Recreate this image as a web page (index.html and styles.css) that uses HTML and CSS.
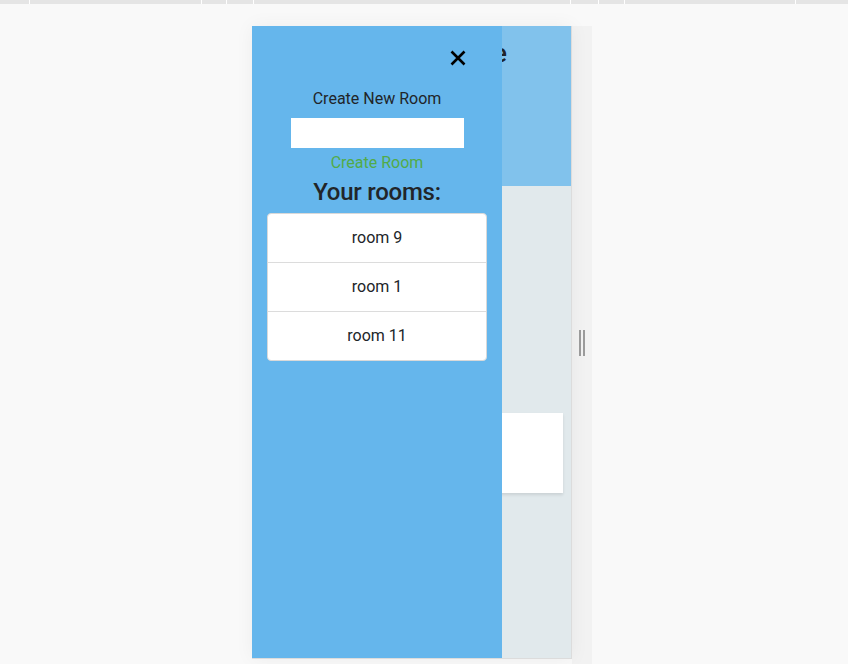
FILE: index.html
```html
<!DOCTYPE html>
<html lang="en">
<head>
<meta charset="utf-8">
<title>Chat Rooms</title>
<link rel="stylesheet" href="styles.css">
</head>
<body>
<div class="topbar"></div>
<div class="stage">
  <div class="device">
    <div class="screen">
      <header class="app-header">
        <h1 class="app-title">Welcome</h1>
      </header>
      <main class="app-main">
        <div class="card"></div>
      </main>
      <aside class="sidebar">
        <div class="close-row">
          <button class="close-btn" aria-label="Close">
            <svg width="16" height="16" viewBox="0 0 16 16"><path d="M1.5 1.5 L14.5 14.5 M14.5 1.5 L1.5 14.5" stroke="#000" stroke-width="2.6" fill="none"/></svg>
          </button>
        </div>
        <div class="label">Create New Room</div>
        <input class="room-input" type="text">
        <div class="create-link">Create Room</div>
        <h4 class="rooms-title">Your rooms:</h4>
        <ul class="list-group">
          <li class="list-item">room 9</li>
          <li class="list-item">room 1</li>
          <li class="list-item">room 11</li>
        </ul>
      </aside>
    </div>
    <div class="handle-strip">
      <div class="handle"><span class="bar"></span><span class="bar"></span></div>
    </div>
  </div>
</div>
</body>
</html>
```
FILE: styles.css
```css
* { box-sizing: border-box; }
html, body { margin: 0; padding: 0; }
body {
  background: #f9f9f9;
  font-family: Roboto, "Liberation Sans", sans-serif;
  color: #212529;
  height: 664px;
  overflow: hidden;
}
.topbar {
  height: 4px;
  background:
    linear-gradient(#fff, #fff) 29px 0 / 1px 4px no-repeat,
    linear-gradient(#fff, #fff) 201px 0 / 1px 4px no-repeat,
    linear-gradient(#fff, #fff) 226px 0 / 1px 4px no-repeat,
    linear-gradient(#fff, #fff) 253px 0 / 1px 4px no-repeat,
    linear-gradient(#fff, #fff) 570px 0 / 1px 4px no-repeat,
    linear-gradient(#fff, #fff) 598px 0 / 1px 4px no-repeat,
    linear-gradient(#fff, #fff) 624px 0 / 1px 4px no-repeat,
    linear-gradient(#fff, #fff) 795px 0 / 1px 4px no-repeat,
    #e5e5e5;
}
.stage {
  padding-top: 22px;
  padding-left: 252px;
}
.device {
  display: flex;
  width: 340px;
  height: 638px;
}
.screen {
  position: relative;
  width: 320px;
  height: 633px;
  background: #e1e9ec;
  border-right: 1px solid #dcdcdc;
  border-bottom: 1px solid #dcdcdc;
  box-shadow: 0 0 18px rgba(0,0,0,0.05);
  overflow: hidden;
}
.app-header {
  height: 160px;
  background: #81c2ec;
  display: flex;
  justify-content: flex-end;
  padding: 12px 64px 0 0;
}
.app-title {
  margin: 0;
  font-size: 26px;
  font-weight: 500;
  line-height: 30px;
  color: #212529;
}
.app-main {
  padding: 227px 8px 0 10px;
}
.card {
  height: 80px;
  background: #fff;
  box-shadow: 0 2px 3px rgba(0,0,0,0.1);
}
.sidebar {
  position: absolute;
  left: 0;
  top: 0;
  width: 250px;
  height: 100%;
  background: #65b6ec;
  padding-top: 24px;
  display: flex;
  flex-direction: column;
  align-items: center;
}
.close-row {
  align-self: stretch;
  display: flex;
  justify-content: flex-end;
  padding-right: 36px;
  height: 16px;
}
.close-btn {
  border: 0;
  padding: 0;
  background: none;
  width: 16px;
  height: 16px;
  display: block;
}
.close-btn svg { display: block; }
.label {
  margin-top: 21px;
  font-size: 16px;
  line-height: 24px;
}
.room-input {
  margin-top: 7px;
  width: 173px;
  height: 30px;
  border: 0;
  background: #fff;
  outline: none;
  display: block;
}
.create-link {
  margin-top: 3px;
  font-size: 16px;
  line-height: 24px;
  color: #52ab48;
}
.rooms-title {
  margin: 3px 0 0;
  font-size: 24px;
  font-weight: 500;
  letter-spacing: -0.25px;
  line-height: 29px;
}
.list-group {
  list-style: none;
  margin: 6px 0 0;
  padding: 0;
  width: 220px;
  background: #fff;
  border: 1px solid #d9d9d9;
  border-radius: 4px;
}
.list-item {
  padding: 12px 20px;
  font-size: 16px;
  line-height: 24px;
  text-align: center;
  border-top: 1px solid #dcdcdc;
}
.list-item:first-child { border-top: 0; }
.handle-strip {
  width: 20px;
  height: 638px;
  background: #f2f2f2;
  display: flex;
  align-items: center;
  justify-content: center;
  padding-bottom: 4px;
}
.handle {
  display: flex;
  gap: 2px;
}
.bar {
  width: 2px;
  height: 26px;
  background: #9c9c9c;
}
```
